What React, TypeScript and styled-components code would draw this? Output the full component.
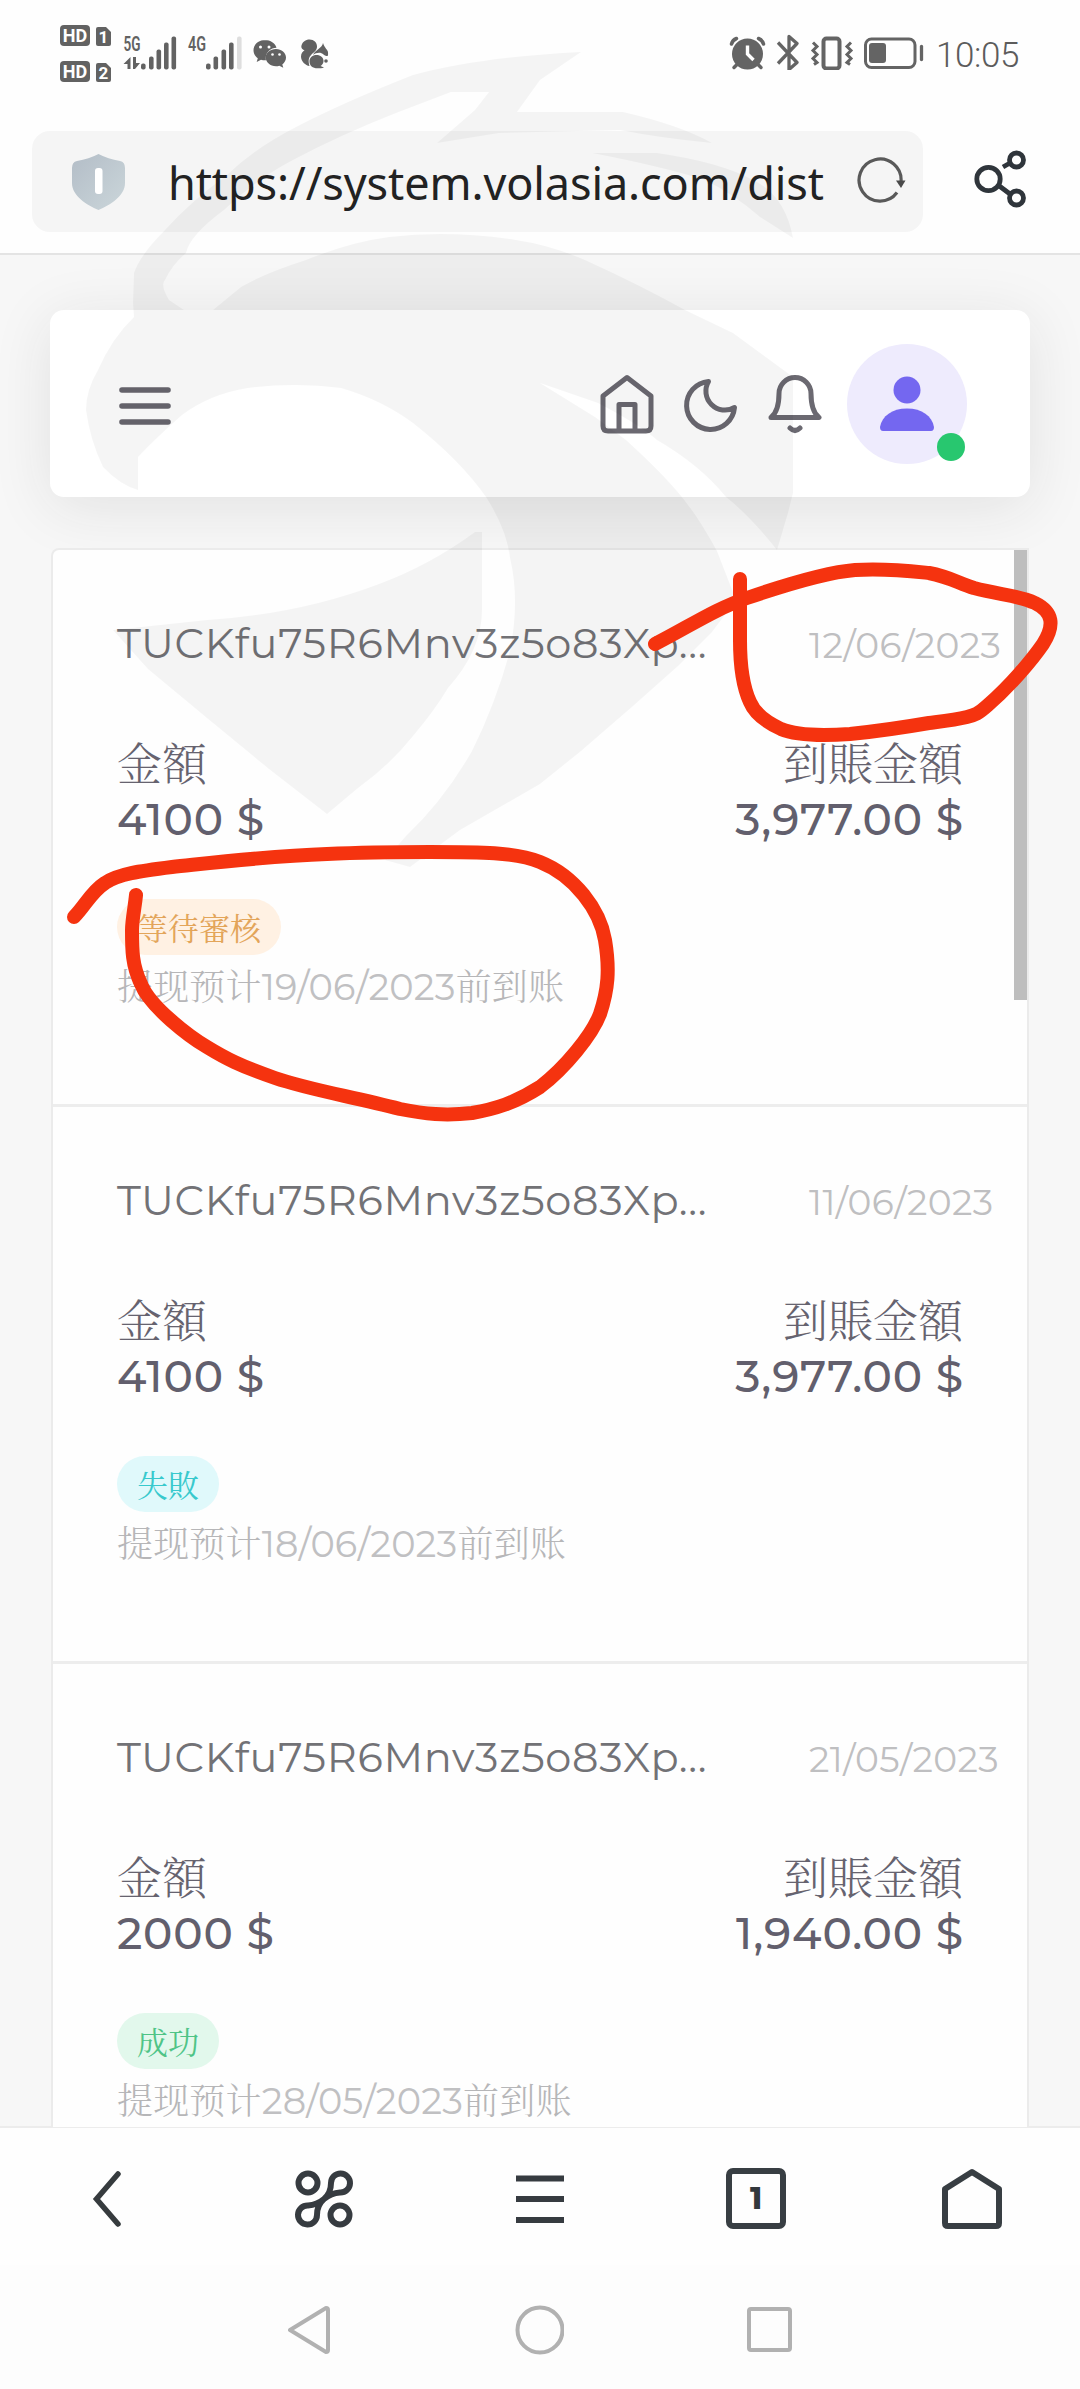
import React from "react";
import styled, { createGlobalStyle } from "styled-components";

const latin = `Montserrat, Inter, "Noto Sans CJK TC", "Noto Sans CJK SC", sans-serif`;
const hant = `"Noto Serif CJK TC", "Noto Sans CJK TC", sans-serif`;
const hans = `"Noto Serif CJK SC", "Noto Sans CJK SC", sans-serif`;

const GlobalStyle = createGlobalStyle`
  * { box-sizing: border-box; }
  html, body { margin: 0; padding: 0; background: #fdfdfd; }
  body { font-family: ${latin}; }
  svg { display: block; flex: none; }
`;

const Screen = styled.div`
  position: relative;
  width: 1080px;
  height: 2389px;
  overflow: hidden;
  display: flex;
  flex-direction: column;
  background: #fefefe;
`;

const StatusBar = styled.header`
  height: 108px;
  flex: none;
  display: flex;
  justify-content: space-between;
  padding: 20px 61px 0 58px;
`;

const StatusGroup = styled.div`
  display: flex;
  align-items: flex-start;
`;

const Clock = styled.time`
  font: 300 35px/36px Roboto, sans-serif;
  letter-spacing: -0.4px;
  color: #5c5c5c;
  margin: 18px 0 0 11px;
  width: 83px;
  white-space: nowrap;
`;

const BrowserBar = styled.div`
  height: 147px;
  flex: none;
  display: flex;
  align-items: flex-start;
  padding: 23px 54px 0 32px;
  border-bottom: 2px solid #e4e4e4;
  justify-content: space-between;
`;

const Address = styled.div`
  width: 891px;
  height: 101px;
  border-radius: 18px;
  background: #f5f5f5;
  display: flex;
  align-items: center;
  padding: 0 17px 0 39px;
`;

const Url = styled.span`
  flex: 1;
  margin-left: 42px;
  font: 400 45px/60px "Noto Sans", sans-serif;
  letter-spacing: -0.1px;
  color: #222;
  white-space: nowrap;
  padding-top: 3px;
`;

const ShareButton = styled.div`
  margin-top: 18px;
`;

const Page = styled.main`
  height: 1872px;
  flex: none;
  overflow: hidden;
  display: flex;
  flex-direction: column;
  gap: 51px;
  background: #f7f7f7;
  padding: 55px 50px 0;
`;

const Navbar = styled.nav`
  height: 187px;
  flex: none;
  border-radius: 14px;
  background: #fff;
  box-shadow: 0 10px 60px rgba(40, 40, 40, 0.1);
  display: flex;
  align-items: center;
  justify-content: space-between;
  padding: 1px 63px 0 66px;
`;

const MenuButton = styled.div`
  padding-top: 3px;
`;

const NavIcons = styled.div`
  display: flex;
  align-items: center;
  gap: 24px;
`;

const Avatar = styled.div`
  position: relative;
  width: 120px;
  height: 120px;
  border-radius: 50%;
  background: #eeebfd;
  display: grid;
  place-items: center;
  margin-left: -2px;
`;

const Online = styled.i`
  position: absolute;
  right: 2px;
  bottom: 3px;
  width: 28px;
  height: 28px;
  border-radius: 50%;
  background: #28c76f;
`;

const List = styled.section`
  position: relative;
  margin: 0 1px;
  background: #fefefe;
  border: 2px solid #ebebeb;
  border-bottom: 0;
  border-radius: 8px 0 0 0;
  height: 1700px;
  flex: none;
`;

const ScrollThumb = styled.div`
  position: absolute;
  top: 0;
  right: 0;
  width: 13px;
  height: 450px;
  background: #bebebe;
`;

const Row = styled.article`
  height: 557px;
  padding: 69px 0 0 64px;
  border-bottom: 3px solid #ededed;
`;

const RowHead = styled.div`
  display: flex;
  align-items: center;
  height: 48px;
`;

const Wallet = styled.span`
  width: 692px;
  font-size: 41.5px;
  font-weight: 400;
  letter-spacing: 0.7px;
  color: #727276;
  white-space: nowrap;
`;

const DateText = styled.time`
  font-size: 36px;
  font-weight: 400;
  letter-spacing: 0.4px;
  color: #bfbfc1;
  white-space: nowrap;
  padding-top: 3px;
`;

const Amounts = styled.div`
  display: flex;
  justify-content: space-between;
  margin-top: 68px;
  padding-right: 64px;
`;

const Amount = styled.div<{ $end?: boolean }>`
  display: flex;
  flex-direction: column;
  align-items: ${(p) => (p.$end ? "flex-end" : "flex-start")};
`;

const AmountLabel = styled.span`
  font: 300 45px/54px ${hant};
  color: #66636f;
`;

const AmountValue = styled.span`
  font-size: 44px;
  line-height: 54px;
  font-weight: 500;
  letter-spacing: 0.9px;
  margin: 3px -1px 0 0;
  color: #625f6d;
  white-space: nowrap;
`;

const Badge = styled.span<{ $ink: string; $fill: string }>`
  display: flex;
  width: max-content;
  height: 56px;
  align-items: center;
  border-radius: 28px;
  padding: 0 20px;
  margin-top: 53px;
  font: 400 31px/56px ${hant};
  color: ${(p) => p.$ink};
  background: ${(p) => p.$fill};
`;

const Note = styled.p`
  margin: 5px 0 0;
  font-size: 36.7px;
  line-height: 50px;
  font-weight: 400;
  letter-spacing: 0.17px;
  color: #c0c0c2;
  white-space: nowrap;
`;

const NoteCjk = styled.span`
  font-family: ${hans};
  font-size: 36px;
  font-weight: 300;
  color: #b6b6b8;
`;

const BrowserNav = styled.nav`
  height: 139px;
  flex: none;
  border-top: 2px solid #ececec;
  display: grid;
  grid-template-columns: repeat(5, 1fr);
  place-items: center;
  background: #fefefe;
  padding-top: 4px;
  margin-top: -1px;
`;

const TabCount = styled.span`
  width: 60px;
  height: 61px;
  border: 6px solid #383e43;
  border-radius: 7px;
  font: 800 30px/49px Montserrat, Inter, sans-serif;
  text-align: center;
  color: #33383c;
`;

const SystemNav = styled.nav`
  flex: 1;
  display: flex;
  justify-content: center;
  align-items: center;
  gap: 182px;
  padding-top: 5px;
  background: #fdfdfd;
`;

const Overlay = styled.svg`
  position: absolute;
  inset: 0;
  pointer-events: none;
`;

const SimIcons = () => (
  <svg width="280" height="70" viewBox="58 20 280 70" fill="#626262">
    {[
      [25, "1"],
      [61, "2"],
    ].map(([y, n]) => (
      <g key={n}>
        <rect x="60" y={y as number} width="30" height="21" rx="4" />
        <path d={`M98 ${(y as number) + 2}h8l5 5v12q0 2-2 2h-11q-2 0-2-2v-15q0-2 2-2z`} />
        <text x="75" y={(y as number) + 17} fontSize="18" fontWeight="700" fontFamily="Roboto, sans-serif" textAnchor="middle" fill="#fff">HD</text>
        <text x="103.500" y={(y as number) + 18} fontSize="17" fontWeight="700" fontFamily="Roboto, sans-serif" textAnchor="middle" fill="#fff">{n}</text>
      </g>
    ))}
    <text x="123.500" y="51" fontSize="20" fontWeight="600" fontFamily="Roboto, sans-serif" textLength="17" lengthAdjust="spacingAndGlyphs">5G</text>
    <text x="188" y="51" fontSize="20" fontWeight="600" fontFamily="Roboto, sans-serif" textLength="18" lengthAdjust="spacingAndGlyphs">4G</text>
    <path d="M130.500 69v-12l-7 7h4v5zM133 57v12h2l5-6h-4v-6z" />
    {[[141, 6], [149, 13], [156.500, 20], [164, 27], [171.500, 33]].map(([x, h]) => (
      <rect key={x} x={x} y={69.500 - h} width="4.600" height={h} rx="2" />
    ))}
    {[[206, 6], [213.500, 13], [221.500, 20], [229, 27]].map(([x, h]) => (
      <rect key={x} x={x} y={69.500 - h} width="4.600" height={h} rx="2" />
    ))}
    <rect x="237" y="36.500" width="4.600" height="33" rx="2" fill="#dedede" />
    <path d="M265 40c-6.500 0-11.500 4.600-11.500 10.300 0 3.200 1.700 6 4.300 7.900l-1.100 3.700 4.300-2.200q2 .6 4 .6h1c-1.500-7 4-12.500 10.500-12.600-1.400-4.500-6-7.700-11.500-7.700z" />
    <path d="M276 49c-5.800 0-10.300 3.800-10.300 8.600s4.500 8.600 10.300 8.600q1.700 0 3.300-.5l4 2-1-3.300c2.300-1.600 3.700-4 3.700-6.800 0-4.800-4.500-8.600-10-8.600z" />
    <g fill="#fff">
      <circle cx="260.500" cy="47" r="1.500" /><circle cx="269" cy="47" r="1.500" />
      <circle cx="272.500" cy="54.500" r="1.300" /><circle cx="279.500" cy="54.500" r="1.300" />
    </g>
    {/* squirrel: tail, head, body */}
    <path d="M303 49.500c-1.500-1-2-2.500-1.500-4 1-3.500 4-6 8-6 4.500 0 7.500 3 7.500 7 0 4-3 5.500-5.500 8-3 3-3.500 6-2 11.500-4-.5-8.500-4.500-8.500-9.500 0-3.500 2-5.500 3.500-6-.6-.2-1-.5-1.500-1z" />
    <path d="M323 43c-.5 2.500-2 4-4.500 6-2.500 2-4.500 3.500-5.500 6 3-2.500 8-3 10.500-.5 1.500 1.500 3 2 4.500 1 .5-4-.5-5-1.800-6.500-1-1.500-2.200-3-3.200-6z" />
    <path d="M309.500 61.500c0-4 3-6.500 7-6.500s7 2.500 7 6c0 2.500-1.500 4-3 5l3.500 1.500c-2 .8-4 .8-6.500.8-5 0-8-2.500-8-6.800z" />
    <circle cx="326" cy="61" r="1.800" />
  </svg>
);

const DeviceIcons = () => (
  <svg width="197" height="50" viewBox="727 20.500 197 50" fill="none" stroke="#646464">
    <circle cx="746.500" cy="54.500" r="15.500" fill="#646464" stroke="none" />
    <path d="M730.500 44.500q1-4 5-5.500M757.500 39q4 1.500 5 5.500" strokeWidth="3.500" strokeLinecap="round" />
    <path d="M736 65l-3 3M757 65l3 3" strokeWidth="3.500" strokeLinecap="round" />
    <path d="M746.500 46v8.500l6 6" stroke="#fff" strokeWidth="3.400" />
    <path d="M777 43l19 20-8 7V37l8 7-19 20" strokeWidth="3.300" strokeLinejoin="round" />
    <rect x="822.500" y="39" width="16" height="30" rx="3" strokeWidth="4" />
    <path d="M812 43l4 4-4 4 4 4-4 4 4 4-3 2M850 43l-4 4 4 4-4 4 4 4-4 4 3 2" strokeWidth="3" />
    <rect x="864.500" y="39.500" width="49.500" height="28.500" rx="6" strokeWidth="3" />
    <rect x="868" y="43.500" width="17" height="20" rx="3" fill="#646464" stroke="none" />
    <path d="M920.500 47v13" strokeWidth="3.300" strokeLinecap="round" />
  </svg>
);

const Shield = () => (
  <svg width="55" height="58" viewBox="0 0 55 58">
    <defs>
      <linearGradient id="shield" x1="0" y1="0" x2="1" y2="1">
        <stop offset="0" stopColor="#b3bdc7" />
        <stop offset="1" stopColor="#cbd6da" />
      </linearGradient>
    </defs>
    <path d="M27.500 1Q37 6 49 8q5 1 5 7v15c0 13-15 22-26.500 27C16 52 1 43 1 30V15q0-6 5-7Q18 6 27.500 1z" fill="url(#shield)" />
    <rect x="24" y="15" width="7.500" height="26" rx="3" fill="#fff" />
  </svg>
);

const Refresh = () => (
  <svg width="50" height="50" viewBox="855 155 50 50" fill="none" stroke="#595959" strokeWidth="3.200">
    <path d="M896 190.500A21 21 0 1 1 900 180" />
    <path d="M895 178.500h9.500l-4.500 7.500z" fill="#4a4a4a" stroke="none" />
  </svg>
);

const Share = () => (
  <svg width="52" height="60" viewBox="974 149 52 60" fill="none" stroke="#2f353b" strokeWidth="4.800">
    <circle cx="988.500" cy="179" r="11.700" />
    <circle cx="1016.500" cy="160" r="7" />
    <circle cx="1016.500" cy="198" r="7" />
    <path d="M1003 167l7-4M998 185l12 9" />
  </svg>
);

const Menu = () => (
  <svg width="58" height="44" viewBox="0 0 58 44" stroke="#69676f" strokeWidth="5.600" strokeLinecap="round">
    <path d="M6 6h46M6 22h46M6 38h46" />
  </svg>
);

const HomeIcon = () => (
  <svg width="60" height="60" viewBox="597 374 60 60" fill="none" stroke="#6b6971" strokeWidth="5" strokeLinejoin="round">
    <path d="M603 396l24-18.500 24 18.500v30q0 5-5 5h-38q-5 0-5-5zM619 431v-26.500h16V431" />
  </svg>
);

const Moon = () => (
  <svg width="60" height="60" viewBox="681 374 60 60" fill="none" stroke="#6b6971" strokeWidth="5" strokeLinejoin="round">
    <path d="M734.500 407.500a24 24 0 1 1-26-26a19 19 0 0 0 26 26z" />
  </svg>
);

const Bell = () => (
  <svg width="60" height="60" viewBox="765 374 60 60" fill="none" stroke="#6b6971" strokeWidth="5" strokeLinejoin="round" strokeLinecap="round">
    <path d="M771 417.500c5-4 8-11 8-24a16 16 0 0 1 32 0c0 13 3 20 8 24zM790 428q5 5 10 0" />
  </svg>
);

const Person = () => (
  <svg width="56" height="58" viewBox="0 0 56 58" fill="#7467f0">
    <circle cx="28" cy="15" r="13.500" />
    <path d="M1 52C3 41 13 33.500 28 33.500s25 7.500 27 18.500q0 4-3 4H4q-3 0-3-4z" />
  </svg>
);

const rows = [
  { date: "12/06/2023", amount: "4100 $", net: "3,977.00 $", status: "等待審核", due: "19/06/2023", ink: "#e3a55a", fill: "#fff1e3" },
  { date: "11/06/2023", amount: "4100 $", net: "3,977.00 $", status: "失敗", due: "18/06/2023", ink: "#38c9cd", fill: "#e0f9fb" },
  { date: "21/05/2023", amount: "2000 $", net: "1,940.00 $", status: "成功", due: "28/05/2023", ink: "#4fc487", fill: "#e2f8ec" },
];

const Watermark = () => (
  <g fill="#000" fillOpacity="0.04">
    <path d="M581 52Q480 57 413 75Q344 102 296 127Q255 148 227 175Q190 202 165 230Q140 255 134 273L133 303L134 317Q112 338 98 370Q86 390 86 410Q90 440 103 467Q120 485 138 490V457Q158 436 182 415Q210 394 248 388Q295 382 341 388Q382 400 413 423Q460 460 486 497Q507 530 510 558Q520 600 510 651Q495 705 472 751Q444 800 406 836L385 860L410 867L460 830L540 784L581 751L633 706L678 666L712 632L736 600L717 551Q700 520 688 505Q670 480 626 440L595 417L540 383L598 403Q640 425 657 440Q700 465 726 497Q750 516 777 550L788 513L793 493V377L733 333L685 310Q640 285 585 260Q550 245 516 240Q450 230 389 237Q350 242 306 260Q265 273 241 287L213 310H184L169 300Q160 285 165 280Q172 265 186 253Q190 235 224 210Q255 180 293 160Q340 135 396 113L451 92H489L475 110L437 143L499 133L620 130Q660 138 712 143Q680 125 623 112H517L540 80Z" />
    <path d="M592 153H657Q720 162 753 180Q785 195 793 238L760 217Q735 195 705 180Q660 166 592 153Z" />
    <path d="M475 532Q430 565 379 584Q300 614 207 620L113 630L148 669L207 718L269 769L327 814L358 788Q390 765 413 736Q435 710 448 688Q482 650 482 610V532Z" />
  </g>
);

const Markup = () => (
  <g fill="none" stroke="#f5330f" strokeWidth="14" strokeLinecap="round" strokeLinejoin="round">
    <path d="M655 644C690 626 715 609 747 598C785 585 830 572 855 570C885 568 910 571 929 573C950 577 958 583 974 588C1000 595 1018 595 1035 603C1053 612 1055 625 1043 644C1032 660 1010 686 988 705C978 714 975 715 967 717C955 720 945 721 929 723C900 728 870 732 850 734C820 736 795 735 781 729C768 723 755 714 750 702C742 685 740 665 740 640V579" />
    <path d="M74 917C85 906 91 892 105 883C118 874 140 871 172 867C220 862 270 856 327 854C370 852 400 852 430 852C480 852 515 852 540 862C575 876 600 910 605 940C610 970 608 990 600 1014C592 1035 565 1068 540 1087C515 1103 495 1109 472 1113C445 1116 425 1114 400 1109C350 1096 310 1090 275 1078C240 1066 225 1058 207 1047C190 1037 150 1007 141 984C132 965 132 950 132 930C132 920 135 906 136 895" />
  </g>
);

export default function App() {
  return (
    <Screen>
      <GlobalStyle />
      <StatusBar>
        <StatusGroup><SimIcons /></StatusGroup>
        <StatusGroup>
          <DeviceIcons />
          <Clock>10:05</Clock>
        </StatusGroup>
      </StatusBar>
      <BrowserBar>
        <Address>
          <Shield />
          <Url>https://system.volasia.com/dist</Url>
          <Refresh />
        </Address>
        <ShareButton><Share /></ShareButton>
      </BrowserBar>
      <Page>
        <Navbar>
          <MenuButton><Menu /></MenuButton>
          <NavIcons>
            <HomeIcon />
            <Moon />
            <Bell />
            <Avatar><Person /><Online /></Avatar>
          </NavIcons>
        </Navbar>
        <List>
          {rows.map((r) => (
            <Row key={r.date}>
              <RowHead>
                <Wallet>TUCKfu75R6Mnv3z5o83Xp...</Wallet>
                <DateText>{r.date}</DateText>
              </RowHead>
              <Amounts>
                <Amount>
                  <AmountLabel>金額</AmountLabel>
                  <AmountValue>{r.amount}</AmountValue>
                </Amount>
                <Amount $end>
                  <AmountLabel>到賬金額</AmountLabel>
                  <AmountValue>{r.net}</AmountValue>
                </Amount>
              </Amounts>
              <Badge $ink={r.ink} $fill={r.fill}>{r.status}</Badge>
              <Note>
                <NoteCjk>提现预计</NoteCjk>{r.due}<NoteCjk>前到账</NoteCjk>
              </Note>
            </Row>
          ))}
          <ScrollThumb />
        </List>
      </Page>
      <BrowserNav>
        <svg width="36" height="60" viewBox="90 2168 36 60" fill="none" stroke="#363b3e" strokeWidth="5.500" strokeLinecap="round">
          <path d="M118 2173l-21.500 25 21.500 25" />
        </svg>
        <svg width="60" height="60" viewBox="294 2168 60 60" fill="none" stroke="#363b40" strokeWidth="6">
          <circle cx="308" cy="2182" r="9.500" />
          <circle cx="340" cy="2214" r="9.500" />
          <path d="M324 2198Q331 2192 331 2182A9.500 9.500 0 1 1 340 2191.500Q331 2192 324 2198Q317 2204 317 2214A9.500 9.500 0 1 1 308 2204.500Q317 2204 324 2198" />
        </svg>
        <svg width="50" height="50" viewBox="0 0 50 50" stroke="#363b40" strokeWidth="6">
          <path d="M1 4.500h48M1 25h48M1 46h48" />
        </svg>
        <TabCount>1</TabCount>
        <svg width="62" height="64" viewBox="0 0 62 64" fill="none" stroke="#383e43" strokeWidth="6" strokeLinejoin="round">
          <path d="M4 22L31 5l27 17v34q0 3-3 3H7q-3 0-3-3z" />
        </svg>
      </BrowserNav>
      <SystemNav>
        <svg width="44" height="52" viewBox="0 0 44 52" fill="none" stroke="#b1b1b1" strokeWidth="4" strokeLinejoin="round">
          <path d="M2 26L38 4q2 0 2 2v40q0 2-2 2z" />
        </svg>
        <svg width="50" height="50" viewBox="0 0 50 50" fill="none" stroke="#b1b1b1" strokeWidth="4">
          <circle cx="26" cy="25" r="22.500" />
        </svg>
        <svg width="46" height="46" viewBox="0 0 46 46" fill="none" stroke="#b1b1b1" strokeWidth="4">
          <rect x="3" y="2" width="41" height="41" rx="2" />
        </svg>
      </SystemNav>
      <Overlay width="1080" height="2389" viewBox="0 0 1080 2389">
        <Watermark />
        <Markup />
      </Overlay>
    </Screen>
  );
}
